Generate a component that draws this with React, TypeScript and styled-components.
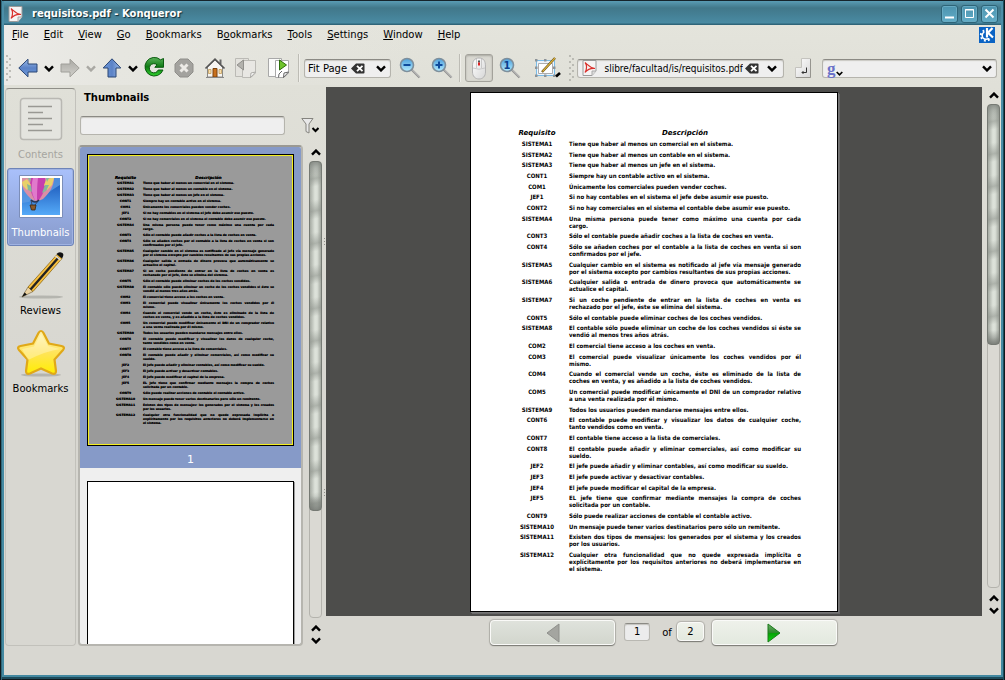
import React from "react";
import styled, { createGlobalStyle, css } from "styled-components";

const Global = createGlobalStyle`
  * { box-sizing: border-box; }
  body { margin: 0; }
  button, input, select { font: inherit; color: inherit; margin: 0; }
  button { padding: 0; border: 0; background: none; }
  body, #root { font-family: "DejaVu Sans", sans-serif; font-size: 10px; color: #000; }
`;

/* ---------- window frame ---------- */

const Window = styled.div`
  height: 100vh;
  min-height: 480px;
  display: flex;
  flex-direction: column;
  padding: 0 4px 5px 4px;
  background: linear-gradient(#16242b 0 1px, #4c8fa8 1px, #4388a0 100%);
  box-shadow: inset 1px 0 #10181c, inset 2px 0 #2f6678, inset -1px 0 #10181c, inset -2px 0 #1d4b5b,
    inset 0 -1px #10181c, inset 0 -3px #1d4b5b;
`;

const TitleBar = styled.header`
  height: 25px;
  flex: none;
  display: flex;
  align-items: center;
  gap: 3px;
  padding: 2px 3px 0 4px;
  background: linear-gradient(#16242b 0 1px, #5a9cb4 1px, #41788a 8px, #447f94 14px, #4a8ba3 23px, #2f6579 24px);
`;

const Title = styled.h1`
  flex: 1;
  margin: 0 0 0 6px;
  font-size: 10px;
  font-weight: bold;
  color: #fff;
  text-shadow: 1px 1px 1px #102a34;
`;

const WindowButton = styled.button`
  width: 17px;
  height: 18px;
  display: grid;
  place-items: center;
  border: 1px solid #2d6478;
  border-radius: 3px;
  background: linear-gradient(#4c93ae, #62adc8);
  box-shadow: inset 0 0 0 1px #67aac2;
`;

const Client = styled.div`
  flex: 1;
  min-height: 0;
  display: flex;
  flex-direction: column;
  padding-bottom: 29px;
  background: linear-gradient(100deg, #ecebe8 0, #e6e6e0 120px, transparent 420px) top / 100% 60px no-repeat,
    linear-gradient(#e4e4dc 0, #e0e0d8 60px, #d8d7d1 340px);
`;

/* ---------- menu and tool bars ---------- */

const MenuBar = styled.nav`
  height: 20px;
  flex: none;
  display: flex;
  align-items: flex-start;
`;

const MenuItem = styled.button`
  padding: 0 7px 0 8px;
  height: 18px;
`;

const Spacer = styled.span`
  flex: 1;
`;

const KdeMark = styled.span`
  display: flex;
  padding: 2px 6px 0 0;
`;

const ToolBar = styled.div`
  height: 42px;
  flex: none;
  display: flex;
  align-items: center;
  padding-top: 4px;
  padding-right: 4px;
`;

const Tool = styled.button<{ $w?: number; $on?: boolean }>`
  width: ${(p) => p.$w ?? 31}px;
  height: 28px;
  flex: none;
  display: grid;
  place-items: center;
  ${(p) =>
    p.$on &&
    css`
      border: 1px solid #a3a29b;
      border-radius: 3px;
      background: #d9d8d1;
      box-shadow: inset 0 1px 2px #a9a8a1;
    `}
`;

const Separator = styled.span`
  width: 1px;
  height: 28px;
  flex: none;
  margin: 0 5px 0 3px;
  background: #bdbcb5;
  box-shadow: 1px 0 #f0efea;
`;

const Field = styled.div<{ $w?: number }>`
  position: relative;
  height: 19px;
  width: ${(p) => (p.$w ? `${p.$w}px` : "auto")};
  flex: ${(p) => (p.$w ? "none" : "1")};
  min-width: 0;
  display: flex;
  align-items: center;
  gap: 2px;
  padding: 0 4px;
  border: 1px solid #b5b4ad;
  border-top-color: #8b8a84;
  border-radius: 3px;
  background: #efefef;
  box-shadow: inset 0 1px 1px #c9c8c3;

  input, select {
    flex: 1;
    min-width: 0;
    height: 17px;
    padding: 0;
    border: 0;
    outline: 0;
    background: none;
    appearance: none;
  }
  svg { flex: none; }
`;

const LocationField = styled(Field)`
  padding-right: 0;
  input { font-family: "DejaVu Sans Condensed", "DejaVu Sans", sans-serif; }
`;

const ZoomSelect = styled(Field)`
  select { position: absolute; inset: 0; width: 100%; padding-left: 3px; }
  svg { position: relative; pointer-events: none; }
  justify-content: flex-end;
  gap: 11px;
`;

const Favicon = styled.span`
  display: flex;
  align-items: flex-end;
  color: #6a72c8;
  font: bold 17px "Liberation Serif", serif;
  line-height: 15px;
`;

/* ---------- side bar ---------- */

const Body = styled.div`
  flex: 1;
  min-height: 0;
  display: flex;
`;

const SideBar = styled.nav`
  width: 71px;
  flex: none;
  margin: 1px 0 0 1px;
  padding: 1px;
  border: 1px solid #c2c1bb;
  border-top-color: #8f8e88;
  border-radius: 4px;
`;

const SideItem = styled.button<{ $on?: boolean }>`
  width: 100%;
  height: 78px;
  display: flex;
  flex-direction: column;
  align-items: center;
  justify-content: space-between;
  line-height: 12px;
  padding: 4px 0 6px;
  border: 1px solid transparent;
  border-radius: 3px;
  &:disabled { color: #a6a5a0; }
  ${(p) =>
    p.$on &&
    css`
      color: #fff;
      border-color: #6e84b8;
      background: linear-gradient(#a9c0fb, #879acb);
      box-shadow: inset 0 0 0 1px #9fb2e2;
    `}
`;

const Panel = styled.section`
  width: 225px;
  flex: none;
  display: flex;
  flex-direction: column;
  margin-left: 2px;
`;

const PanelTitle = styled.h2`
  height: 29px;
  margin: 0;
  padding: 4px 0 0 6px;
  font-size: 10px;
  line-height: 13px;
`;

const FilterRow = styled.div`
  height: 29px;
  display: flex;
  align-items: flex-start;
  padding: 0 18px 0 2px;
`;

const PageList = styled.div`
  flex: 1;
  min-height: 0;
  overflow: hidden;
  border: 2px solid #b6b5af;
  border-top-color: #9a9993;
  border-radius: 4px;
  background: #efefef;
`;

const PageCell = styled.figure<{ $on?: boolean }>`
  margin: 0;
  height: ${(p) => (p.$on ? 321 : 340)}px;
  padding: ${(p) => (p.$on ? 7 : 13)}px 7px 0;
  background: ${(p) => (p.$on ? "#869ac8" : "transparent")};
  color: #fff;
  figcaption { text-align: center; line-height: 13px; padding-top: 7px; font-size: 11px; }
`;

const Thumb = styled.div<{ $on?: boolean }>`
  height: 292px;
  border: 1px solid #000;
  padding: 18px 19px 0 24px;
  background: ${(p) => (p.$on ? "#9a9a9a" : "#fff")};
  box-shadow: ${(p) => (p.$on ? "inset 0 0 0 1px #f4ee20" : "1px 1px #9c9c9c")};
  color: #000;
`;

const SideScroll = styled.div`
  width: 23px;
  flex: none;
  display: flex;
  align-items: stretch;
  justify-content: flex-end;
  padding: 59px 4px 0 0;
  position: relative;
`;

const FilterButton = styled.button`
  position: absolute;
  top: 30px;
  right: 7px;
`;

const Splitter = styled.i`
  position: absolute;
  right: 1px;
  width: 1px;
  height: 7px;
  background: repeating-linear-gradient(#8f8e89 0 1px, transparent 1px 3px);
`;

/* ---------- scroll bar ---------- */

const Scroll = styled.div`
  width: 13px;
  display: flex;
  flex-direction: column;
  align-items: center;
`;

const ScrollArrow = styled.button`
  width: 13px;
  height: 12px;
  flex: none;
  display: grid;
  place-items: center;
`;

const Track = styled.div`
  flex: 1;
  width: 13px;
  margin: 3px 0 4px;
  border: 1px solid #b4b3ad;
  border-radius: 4px;
  background: #dad9d3;
`;

const Handle = styled.div`
  margin: -1px;
  border: 1px solid #767a74;
  border-radius: 4px;
  background: linear-gradient(#7c817bcc, transparent 14px, transparent calc(100% - 14px), #6c706bcc),
    repeating-linear-gradient(170deg, transparent 0 6px, #8f948d99 17px, transparent 25px 32px),
    linear-gradient(90deg, #a6aba3, #dde2da 45%, #dbe0d8 65%, #a2a79f);
`;

/* ---------- document viewer ---------- */

const Viewer = styled.main`
  flex: 1;
  min-width: 0;
  display: flex;
  flex-direction: column;
`;

const ViewRow = styled.div`
  flex: 1;
  min-height: 0;
  display: flex;
`;

const Desk = styled.div`
  flex: 1;
  min-width: 0;
  overflow: hidden;
  padding-top: 5px;
  background: #4d4d4b;
`;

const Sheet = styled.article`
  width: 368px;
  height: 520px;
  margin: 0 auto;
  padding: 34px 36px 0 43px;
  border: 1px solid #000;
  background: #fff;
  box-shadow: 1px 1px #777, 2px 2px #6a6a6a;
`;

const ViewScroll = styled.div`
  width: 19px;
  flex: none;
  display: flex;
  padding: 2px 1px 0 5px;
`;

const Pager = styled.div`
  height: 30px;
  flex: none;
  display: flex;
  justify-content: center;
  align-items: center;
  padding-top: 3px;
`;

const PagerButton = styled.button<{ $small?: boolean }>`
  width: ${(p) => (p.$small ? 27 : 125)}px;
  height: ${(p) => (p.$small ? 19 : 25)}px;
  margin: ${(p) => (p.$small ? "0 8px 2px 5px" : "0")};
  display: grid;
  place-items: center;
  border-radius: 4px;
  border: 1px solid #fafaf8;
  background: linear-gradient(#eef1ea, #e3e9df);
  box-shadow: 0 1px 1px #7c7b76, 0 0 1px 1px #b4b3ad;
  &:disabled { background: linear-gradient(#dfe2dc, #d2d6cd); }
`;

const PageInput = styled.input`
  width: 26px;
  height: 18px;
  margin: 0 12px 2px 9px;
  padding: 0;
  border: 1px solid #b9b8b2;
  border-top-color: #8b8a84;
  border-radius: 3px;
  background: #ececec;
  box-shadow: inset 0 1px 1px #c4c3be;
  text-align: center;
`;

/* ---------- the requirements table ---------- */

const Table = styled.table<{ $mini?: boolean }>`
  width: 100%;
  table-layout: fixed;
  border-collapse: collapse;
  font-family: ${(p) => (p.$mini ? '"DejaVu Sans"' : '"DejaVu Sans Condensed", "DejaVu Sans"')}, sans-serif;
  font-size: ${(p) => (p.$mini ? 3 : 6)}px;
  line-height: ${(p) => (p.$mini ? 4 : 7)}px;
  font-weight: bold;
  text-shadow: ${(p) => (p.$mini ? "0 0 0 #000" : "none")};

  th, td { padding: 0 0 ${(p) => (p.$mini ? 2 : 4)}px; vertical-align: top; }
  tbody tr:nth-child(3n + 2) td, tbody tr:nth-child(3n + 2) th { padding-bottom: ${(p) => (p.$mini ? 2 : 3)}px; }
  th:first-child { width: ${(p) => (p.$mini ? 27 : 46)}px; text-align: center; }
  thead th {
    height: ${(p) => (p.$mini ? 8 : 13)}px;
    padding-top: 3px;
    padding-bottom: ${(p) => (p.$mini ? 1 : 3)}px;
    font-family: "DejaVu Sans", sans-serif;
    font-size: ${(p) => (p.$mini ? 4 : 7)}px;
    font-style: italic;
  }
  td, thead th:last-child { padding-left: ${(p) => (p.$mini ? 4 : 9)}px; }
`;

const Line = styled.span<{ $full: boolean }>`
  display: block;
  white-space: nowrap;
  text-align: left;
  text-align-last: ${(p) => (p.$full ? "justify" : "left")};
`;

const rows: [string, ...string[]][] = [
  ["SISTEMA1", "Tiene que haber al menos un comercial en el sistema."],
  ["SISTEMA2", "Tiene que haber al menos un contable en el sistema."],
  ["SISTEMA3", "Tiene que haber al menos un jefe en el sistema."],
  ["CONT1", "Siempre hay un contable activo en el sistema."],
  ["COM1", "Únicamente los comerciales pueden vender coches."],
  ["JEF1", "Si no hay contables en el sistema el jefe debe asumir ese puesto."],
  ["CONT2", "Si no hay comerciales en el sistema el contable debe asumir ese puesto."],
  ["SISTEMA4", "Una misma persona puede tener como máximo una cuenta por cada", "cargo."],
  ["CONT3", "Sólo el contable puede añadir coches a la lista de coches en venta."],
  ["CONT4", "Sólo se añaden coches por el contable a la lista de coches en venta si son", "confirmados por el jefe."],
  ["SISTEMA5", "Cualquier cambio en el sistema es notificado al jefe vía mensaje generado", "por el sistema excepto por cambios resultantes de sus propias acciones."],
  ["SISTEMA6", "Cualquier salida o entrada de dinero provoca que automáticamente se", "actualice el capital."],
  ["SISTEMA7", "Si un coche pendiente de entrar en la lista de coches en venta es", "rechazado por el jefe, éste se elimina del sistema."],
  ["CONT5", "Sólo el contable puede eliminar coches de los coches vendidos."],
  ["SISTEMA8", "El contable sólo puede eliminar un coche de los coches vendidos si éste se", "vendió al menos tres años atrás."],
  ["COM2", "El comercial tiene acceso a los coches en venta."],
  ["COM3", "El comercial puede visualizar únicamente los coches vendidos por él", "mismo."],
  ["COM4", "Cuando el comercial vende un coche, éste es eliminado de la lista de", "coches en venta, y es añadido a la lista de coches vendidos."],
  ["COM5", "Un comercial puede modificar únicamente el DNI de un comprador relativo", "a una venta realizada por él mismo."],
  ["SISTEMA9", "Todos los usuarios pueden mandarse mensajes entre ellos."],
  ["CONT6", "El contable puede modificar y visualizar los datos de cualquier coche,", "tanto vendidos como en venta."],
  ["CONT7", "El contable tiene acceso a la lista de comerciales."],
  ["CONT8", "El contable puede añadir y eliminar comerciales, así como modificar su", "sueldo."],
  ["JEF2", "El jefe puede añadir y eliminar contables, así como modificar su sueldo."],
  ["JEF3", "El jefe puede activar y desactivar contables."],
  ["JEF4", "El jefe puede modificar el capital de la empresa."],
  ["JEF5", "EL jefe tiene que confirmar mediante mensajes la compra de coches", "solicitada por un contable."],
  ["CONT9", "Sólo puede realizar acciones de contable el contable activo."],
  ["SISTEMA10", "Un mensaje puede tener varios destinatarios pero sólo un remitente."],
  ["SISTEMA11", "Existen dos tipos de mensajes: los generados por el sistema y los creados", "por los usuarios."],
  ["SISTEMA12", "Cualquier otra funcionalidad que no quede expresada implícita o", "explícitamente por los requisitos anteriores no deberá implementarse en", "el sistema."],
];

const Requirements = ({ mini }: { mini?: boolean }) => (
  <Table $mini={mini}>
    <thead>
      <tr>
        <th scope="col">Requisito</th>
        <th scope="col">Descripción</th>
      </tr>
    </thead>
    <tbody>
      {rows.map(([id, ...lines]) => (
        <tr key={id}>
          <th scope="row">{id}</th>
          <td>
            {lines.map((l, i) => (
              <Line key={l} $full={i < lines.length - 1}>
                {l}
              </Line>
            ))}
          </td>
        </tr>
      ))}
    </tbody>
  </Table>
);

/* ---------- drawings ---------- */

const Chevron = ({ up, color = "#000", size = 10 }: { up?: boolean; color?: string; size?: number }) => (
  <svg width={size} height={size * 0.7} viewBox="0 0 10 7">
    <path d={up ? "M1 5.6L5 1.6L9 5.6" : "M1 1.4L5 5.4L9 1.4"} fill="none" stroke={color} strokeWidth="2.4" />
  </svg>
);

const HiddenSvg = styled.svg`
  position: absolute;
`;

const Gradients = () => (
  <HiddenSvg width="0" height="0">
    <defs>
      <linearGradient id="blue" x2="0" y2="1">
        <stop offset="0" stopColor="#9dbdea" />
        <stop offset=".5" stopColor="#5b82c6" />
        <stop offset="1" stopColor="#6f9bdc" />
      </linearGradient>
      <linearGradient id="grey" x2="0" y2="1">
        <stop offset="0" stopColor="#d2d1cc" />
        <stop offset="1" stopColor="#a9a8a3" />
      </linearGradient>
      <linearGradient id="green" x2="0" y2="1">
        <stop offset="0" stopColor="#5bb35b" />
        <stop offset=".5" stopColor="#0f7a14" />
        <stop offset="1" stopColor="#2fd02c" />
      </linearGradient>
      <linearGradient id="play" x2="0" y2="1">
        <stop offset="0" stopColor="#6fae6c" />
        <stop offset=".48" stopColor="#2c8a2a" />
        <stop offset=".52" stopColor="#06a306" />
        <stop offset="1" stopColor="#12d412" />
      </linearGradient>
      <linearGradient id="glass" x2="0" y2="1">
        <stop offset="0" stopColor="#4c9fdc" />
        <stop offset="1" stopColor="#b4ecff" />
      </linearGradient>
      <linearGradient id="paper" x2="1" y2="1">
        <stop offset="0" stopColor="#ffffff" />
        <stop offset="1" stopColor="#d6d6d6" />
      </linearGradient>
      <linearGradient id="sky" x2="0" y2="1">
        <stop offset="0" stopColor="#1650b4" />
        <stop offset="1" stopColor="#55aaf8" />
      </linearGradient>
      <linearGradient id="gold" x2="0" y2="1">
        <stop offset="0" stopColor="#fff3b0" />
        <stop offset=".5" stopColor="#ffe45a" />
        <stop offset="1" stopColor="#ffee00" />
      </linearGradient>
    </defs>
  </HiddenSvg>
);

const Arrow = ({ dir, off }: { dir: 0 | 90 | 180; off?: boolean }) => (
  <svg width="20" height="20" viewBox="0 0 20 20">
    <path
      transform={`rotate(${dir} 10 10)`}
      d="M.8 10L10 1.2V6H19V14H10V18.8Z"
      fill={off ? "url(#grey)" : "url(#blue)"}
      stroke={off ? "#a09f9a" : "#2b4675"}
    />
  </svg>
);

const PdfIcon = () => (
  <svg width="15" height="16" viewBox="0 0 15 16">
    <path d="M1 .5H14V11L10 15.5H1Z" fill="#f6f4f4" stroke="#9a9a9a" />
    <path d="M14 11H10V15.5" fill="#ddd" stroke="#aaa" />
    <path d="M3 2.500C6 5 8 8 13 8.500C8 8 5 10 3 12.500C5 9 5.500 6 3 2.500" fill="none" stroke="#d9302c" strokeWidth="1.200" />
  </svg>
);

const Reload = () => (
  <svg width="22" height="22" viewBox="0 0 22 22">
    <path
      d="M17.500 2.800L20.500 1.500V10.300H11.800L14 7.800A4.600 4.600 0 1 0 15.200 13H20A9.300 9.300 0 1 1 17.500 2.800Z"
      fill="url(#green)"
      stroke="#0b5c10"
    />
  </svg>
);

const Stop = () => (
  <svg width="20" height="20" viewBox="0 0 20 20">
    <path d="M6 1H14L19 6V14L14 19H6L1 14V6Z" fill="#a3a29e" stroke="#8f8e8a" />
    <path d="M6.500 6.500L13.500 13.500M13.500 6.500L6.500 13.500" stroke="#eceae6" strokeWidth="3" />
  </svg>
);

const Home = () => (
  <svg width="22" height="22" viewBox="0 0 22 22">
    <path d="M15.500 2.500H17.500V7H15.500Z" fill="#666" />
    <path d="M3.500 10L11 3L18.500 10V20H3.500Z" fill="#f7f5f2" stroke="#8a8984" />
    <path d="M1.500 11.500L11 2.200L20.500 11.500" fill="none" stroke="#555" strokeWidth="1.700" />
    <path d="M9 11.500H13V20H9Z" fill="#c8701c" stroke="#7a420e" />
    <path d="M4.500 12.500H7V16.500H4.500ZM15 12.500H17.500V16.500H15Z" fill="#f7dfae" stroke="#c09a58" strokeWidth=".8" />
    <path d="M2 20.500H20" stroke="#888" />
  </svg>
);

const PageTurn = ({ next }: { next?: boolean }) => (
  <svg width="23" height="22" viewBox="0 0 23 22">
    <path d="M1.500 1.500H14.500V19.500H1.500Z" fill={next ? "#fbfbfa" : "#e3e2dd"} stroke={next ? "#a8a8a8" : "#bbbab5"} />
    <path
      d="M8.500 3.500H21.500V16L17 20.500H8.500Z"
      fill={next ? "#fff" : "#e8e7e3"}
      stroke={next ? "#a8a8a8" : "#bbbab5"}
    />
    <path d="M21.500 15L17 16L16.500 20.500Z" fill="#fff" stroke={next ? "#666" : "#aaa9a5"} />
    {next ? (
      <path d="M12.500 3L19.500 8L12.500 13Z" fill="#6fc42c" stroke="#2c6d0a" />
    ) : (
      <path d="M9.500 3L3 8L9.500 13Z" fill="#b3b2ad" stroke="#92918d" />
    )}
    {next && <path d="M15 14L12 17L11.500 20.500" fill="none" stroke="#666" />}
  </svg>
);

const Clear = () => (
  <svg width="14" height="11" viewBox="0 0 14 11">
    <path d="M0 5.500L5 .5H12.500Q13.500 .5 13.500 1.500V9.500Q13.500 10.500 12.500 10.500H5Z" fill="#333" />
    <path d="M6 2.800L11.500 8.200M11.500 2.800L6 8.200" stroke="#fff" strokeWidth="1.800" />
  </svg>
);

const Lens = ({ sign }: { sign: "-" | "+" | "1" }) => (
  <svg width="22" height="22" viewBox="0 0 22 22">
    <path d="M12.500 12.500L20.500 20.500" stroke="#8e8e8e" strokeWidth="2.200" />
    <path d="M13 12.500L21 20.500" stroke="#cfcfcf" />
    <circle cx="8" cy="8" r="6.500" fill="url(#glass)" stroke="#7e8f9c" strokeWidth="1.600" />
    {sign === "1" ? (
      <text x="8" y="11.500" textAnchor="middle" fontSize="10" fontWeight="bold" fill="#0c3f8c">
        1
      </text>
    ) : (
      <path d={sign === "+" ? "M4.500 8H11.500M8 4.500V11.500" : "M4.500 8H11.500"} stroke="#0d4a9c" strokeWidth="2" />
    )}
  </svg>
);

const Mouse = () => (
  <svg width="16" height="23" viewBox="0 0 16 23">
    <path d="M8 1C12.500 1 14.500 4 14.500 9V15C14.500 19 12 22 8 22S1.500 19 1.500 15V9C1.500 4 3.500 1 8 1Z" fill="url(#paper)" stroke="#b3b3b3" />
    <path d="M2 11Q8 13.500 14 11M5.500 2V11M10.500 2V11" fill="none" stroke="#c9c9c9" />
    <path d="M8 3.500V5.500" stroke="#555" strokeWidth="2" />
    <path d="M8 5.500V8.500" stroke="#d22" strokeWidth="2" />
  </svg>
);

const SelectTool = () => (
  <svg width="27" height="24" viewBox="0 0 27 24">
    <path d="M2.500 4.500H20.500V19.500H2.500Z" fill="#eef4fa" stroke="#79bce8" />
    <path d="M4.500 7.500H18.500V17.500H4.500Z" fill="#fff" stroke="#999" strokeWidth=".8" />
    <path
      d="M1 3H3.500V5.500H1ZM10 3H12.500V5.500H10ZM19 10.500H21.500V13H19ZM1 10.500H3.500V13H1ZM1 18.500H3.500V21H1ZM10 18.500H12.500V21H10ZM19 18.500H21.500V21H19Z"
      fill="#8d9398"
    />
    <path d="M8 16L21 2" stroke="#5c4310" strokeWidth="2.400" />
    <path d="M8.500 15.500L21 2" stroke="#d9b33c" strokeWidth="1.200" />
    <path d="M22 20.500L26 17" stroke="#000" strokeWidth="2.600" />
  </svg>
);

const Grip = () => (
  <svg width="10" height="28" viewBox="0 0 10 28">
    {[2, 8, 14, 20, 26].map((y) => (
      <circle key={y} cx="3" cy={y} r=".9" fill="#a8a7a1" />
    ))}
    {[5, 11, 17, 23].map((y) => (
      <circle key={y} cx="6" cy={y} r=".9" fill="#a8a7a1" />
    ))}
  </svg>
);

const GoPage = () => (
  <svg width="17" height="20" viewBox="0 0 17 20">
    <path d="M6.500 .5H15.500V19.500H.5V9.500H6.500Z" fill="url(#paper)" stroke="#c4c3be" />
    <path d="M15.500 1V19.500H1" fill="none" stroke="#96958f" />
    <path d="M11.500 9.500V14.500H7M8.500 13L7 14.500L8.500 16" fill="none" stroke="#333" />
  </svg>
);

const Kde = () => (
  <svg width="16" height="16" viewBox="0 0 16 16">
    <path d="M0 0H16V16H0Z" fill="#0a63c4" />
    <circle cx="7" cy="8.500" r="5.200" fill="none" stroke="#fff" strokeWidth="2" strokeDasharray="1.900 2.180" />
    <circle cx="7" cy="8.500" r="3.800" fill="none" stroke="#fff" strokeWidth="1.600" />
    <path d="M5.500 0H16V11H5.500Z" fill="#0a63c4" />
    <path d="M8 1V10.500M13.500 1L9 5.800L14 10.500" fill="none" stroke="#fff" strokeWidth="2.200" />
  </svg>
);

const ContentsIcon = () => (
  <svg width="44" height="46" viewBox="0 0 44 46">
    <rect x="1.500" y="3.500" width="41" height="41" rx="3" fill="#e4e4df" stroke="#b9b8b3" strokeWidth="1.500" />
    <path d="M9 11.500H33M9 17.500H24M9 23.500H33M9 29.500H24M9 35.500H33" stroke="#999893" strokeWidth="1.300" />
  </svg>
);

const BalloonIcon = () => (
  <svg width="44" height="46" viewBox="0 0 44 46">
    <path d="M.5 2.500H43.500V44.500H.5Z" fill="#fff" stroke="#7c8eb8" />
    <path d="M3 5H41V42H3Z" fill="url(#sky)" />
    <path d="M3 5H41V12C30 18 22 28 3 30Z" fill="#5b9be4" opacity=".8" />
    <path d="M3 5H35C35 13 31 19 24 26Q17 30 12 26C7 21 3 16 3 10Z" fill="#d98fa6" />
    <path d="M12 5H26C28 12 25 20 20 27H16C11 20 10 12 12 5Z" fill="#c63fae" />
    <path d="M14 5H19C18 12 18 20 18 27H16C12 20 12 12 14 5Z" fill="#e07acb" />
    <path d="M3 9L8 6L12 12L8 17L4 13ZM27 7L32 5H35L33 12L28 17L25 12Z" fill="#e9d06a" />
    <path d="M8 11L12 13L13 19L9 17ZM26 12L30 12L27 18L23 20Z" fill="#84b99b" />
    <path d="M9 5H12L11 9ZM27 5H30L28 9Z" fill="#84b99b" />
    <path d="M12 27L13 32M19 28L16 32" stroke="#3b3b50" strokeWidth=".8" />
    <path d="M12 27Q16 31 20 27" fill="none" stroke="#2a3550" strokeWidth="1.500" />
    <path d="M11 32H17L16 37H12.500Z" fill="#8a5a2c" stroke="#3a2410" strokeWidth=".8" />
  </svg>
);

const PencilIcon = () => (
  <svg width="46" height="48" viewBox="0 0 46 48">
    <ellipse cx="23" cy="46" rx="22" ry="1.600" fill="#9d9c97" opacity=".6" />
    <path d="M4 46L10 36L15 40.500Z" fill="#ecd2a0" stroke="#7c6a44" strokeWidth=".7" />
    <path d="M4 46L6.600 41.500L8.900 43.500Z" fill="#111" />
    <path d="M10 36L39 3.500L44 7.500L15 40.500Z" fill="#f8c040" stroke="#8f6b16" strokeWidth=".8" />
    <path d="M12.500 38.500L40.500 6.500" stroke="#222" strokeWidth="2.400" />
    <path d="M38.500 3Q41 0 44.500 2Q46.500 4 44 7.500Z" fill="#111" />
    <path d="M37.500 5L42.500 9" stroke="#ddd" strokeWidth="1.600" />
  </svg>
);

const StarIcon = () => (
  <svg width="50" height="48" viewBox="0 0 50 48">
    <ellipse cx="25" cy="46" rx="20" ry="1.600" fill="#9d9c97" opacity=".6" />
    <path
      d="M25 2Q26.500 2 27.500 4L33 14.500L45.500 17Q49.500 18 47 21L38.500 30.500L40 42Q40 46 36 44.500L25 39.500L14 44.500Q10 46 10 42L11.500 30.500L3 21Q.5 18 4.500 17L17 14.500L22.500 4Q23.500 2 25 2Z"
      fill="url(#gold)"
      stroke="#e0a818"
      strokeWidth="2.200"
    />
    <path d="M6 20L18 17.500L25 5L32 17L44 20Q30 22 12 31Z" fill="#fff" opacity=".3" />
  </svg>
);

const Funnel = () => (
  <svg width="18" height="17" viewBox="0 0 18 17">
    <path d="M.8 1.500H12L8 7V16L5 14.500V7Z" fill="#e8e8e8" stroke="#85847f" />
    <path d="M11.500 11L14.500 14L17.500 11" fill="none" stroke="#000" strokeWidth="2" />
  </svg>
);

const Triangle = ({ left }: { left?: boolean }) => (
  <svg width="14" height="20" viewBox="0 0 14 20">
    {left ? (
      <path d="M13 1V19L1 10Z" fill="#a4a5a0" stroke="#8e8f8b" />
    ) : (
      <path d="M1 1V19L13 10Z" fill="url(#play)" stroke="#1b7a1b" />
    )}
  </svg>
);

/* ---------- composed parts ---------- */

const menus: [string, string, string][] = [
  ["", "F", "ile"],
  ["", "E", "dit"],
  ["", "V", "iew"],
  ["", "G", "o"],
  ["", "B", "ookmarks"],
  ["B", "o", "okmarks"],
  ["", "T", "ools"],
  ["", "S", "ettings"],
  ["", "W", "indow"],
  ["", "H", "elp"],
];

const ScrollBar = ({ size }: { size: number }) => (
  <Scroll>
    <ScrollArrow aria-label="Scroll up">
      <Chevron up />
    </ScrollArrow>
    <Track>
      <Handle style={{ height: `${size}%` }} />
    </Track>
    <ScrollArrow aria-label="Line up">
      <Chevron up />
    </ScrollArrow>
    <ScrollArrow aria-label="Line down">
      <Chevron />
    </ScrollArrow>
  </Scroll>
);

export default function App() {
  return (
    <Window>
      <Global />
      <Gradients />
      <TitleBar>
        <PdfIcon />
        <Title>requisitos.pdf - Konqueror</Title>
        <WindowButton aria-label="Minimize">
          <svg width="11" height="11">
            <path d="M1 9.500H10" stroke="#fff" strokeWidth="2" />
          </svg>
        </WindowButton>
        <WindowButton aria-label="Maximize">
          <svg width="11" height="11">
            <path d="M1.500 1.500H9.500V9.500H1.500Z" fill="none" stroke="#fff" />
            <path d="M1 2H10" stroke="#fff" />
          </svg>
        </WindowButton>
        <WindowButton aria-label="Close">
          <svg width="11" height="11">
            <path d="M1.500 1.500L9.500 9.500M9.500 1.500L1.500 9.500" stroke="#fff" strokeWidth="2" />
          </svg>
        </WindowButton>
      </TitleBar>
      <Client>
        <MenuBar>
          {menus.map(([a, key, b]) => (
            <MenuItem key={a + key + b}>
              {a}
              <u>{key}</u>
              {b}
            </MenuItem>
          ))}
          <Spacer />
          <KdeMark>
            <Kde />
          </KdeMark>
        </MenuBar>
        <ToolBar>
          <Grip />
          <Tool $w={28} aria-label="Back"><Arrow dir={0} /></Tool>
          <Tool $w={14} aria-label="Back history"><Chevron /></Tool>
          <Tool $w={28} aria-label="Forward" disabled><Arrow dir={180} off /></Tool>
          <Tool $w={14} aria-label="Forward history" disabled><Chevron color="#a9a8a3" /></Tool>
          <Tool $w={28} aria-label="Up"><Arrow dir={90} /></Tool>
          <Tool $w={14} aria-label="Up history"><Chevron /></Tool>
          <Tool $w={28} aria-label="Reload"><Reload /></Tool>
          <Tool aria-label="Stop" disabled><Stop /></Tool>
          <Tool aria-label="Home"><Home /></Tool>
          <Tool aria-label="Previous page" disabled><PageTurn /></Tool>
          <Tool $w={34} aria-label="Next page"><PageTurn next /></Tool>
          <Separator />
          <ZoomSelect $w={87}>
            <select aria-label="Zoom" defaultValue="Fit Page">
              <option>Fit Page</option>
            </select>
            <Clear />
            <Chevron />
          </ZoomSelect>
          <Tool $w={37} aria-label="Zoom out"><Lens sign="-" /></Tool>
          <Tool $w={28} aria-label="Zoom in"><Lens sign="+" /></Tool>
          <Separator />
          <Tool $w={28} $on aria-label="Browse tool"><Mouse /></Tool>
          <Tool $w={34} aria-label="Zoom tool"><Lens sign="1" /></Tool>
          <Tool $w={40} aria-label="Selection tool"><SelectTool /></Tool>
          <Grip />
          <LocationField $w={207}>
            <PdfIcon />
            <input aria-label="Location" dir="rtl" defaultValue="slibre/facultad/is/requisitos.pdf" />
            <Clear />
            <Tool $w={22} aria-label="Location history"><Chevron /></Tool>
          </LocationField>
          <Tool $w={38} aria-label="Go"><GoPage /></Tool>
          <Field>
            <Favicon>
              g
              <Chevron size={7} />
            </Favicon>
            <input aria-label="Search" />
            <Chevron />
          </Field>
        </ToolBar>
        <Body>
          <SideBar>
            <SideItem disabled><ContentsIcon />Contents</SideItem>
            <SideItem $on><BalloonIcon />Thumbnails</SideItem>
            <SideItem><PencilIcon />Reviews</SideItem>
            <SideItem><StarIcon />Bookmarks</SideItem>
          </SideBar>
          <Panel>
            <PanelTitle>Thumbnails</PanelTitle>
            <FilterRow>
              <Field>
                <input aria-label="Filter thumbnails" />
              </Field>
            </FilterRow>
            <PageList>
              <PageCell $on>
                <Thumb $on>
                  <Requirements mini />
                </Thumb>
                <figcaption>1</figcaption>
              </PageCell>
              <PageCell>
                <Thumb />
              </PageCell>
            </PageList>
          </Panel>
          <SideScroll>
            <FilterButton aria-label="Filter options"><Funnel /></FilterButton>
            <ScrollBar size={77} />
            <Splitter style={{ top: "27%" }} />
            <Splitter style={{ top: "72%" }} />
          </SideScroll>
          <Viewer>
            <ViewRow>
              <Desk>
                <Sheet>
                  <Requirements />
                </Sheet>
              </Desk>
              <ViewScroll>
                <ScrollBar size={50} />
              </ViewScroll>
            </ViewRow>
            <Pager>
              <PagerButton disabled aria-label="Previous page"><Triangle left /></PagerButton>
              <PageInput aria-label="Page" defaultValue="1" />
              <span>of</span>
              <PagerButton $small aria-label="Last page 2">2</PagerButton>
              <PagerButton aria-label="Next page"><Triangle /></PagerButton>
            </Pager>
          </Viewer>
        </Body>
      </Client>
    </Window>
  );
}
